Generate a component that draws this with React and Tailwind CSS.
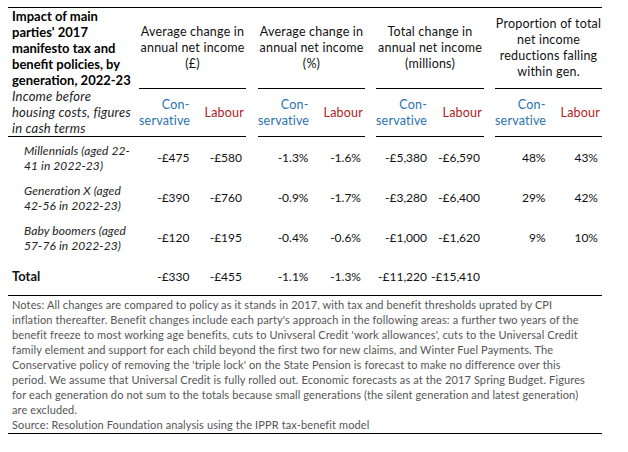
const CON = "text-[#2a72ad]";
const LAB = "text-[#ae1b24]";

const groups = [
  { w: "w-[107px]", title: ["Average change in", "annual net income", "(£)"] },
  { w: "w-[107px]", title: ["Average change in", "annual net income", "(%)"] },
  { w: "w-[108px]", title: ["Total change in", "annual net income", "(millions)"] },
  { w: "w-[107px]", title: ["Proportion of total", "net income", "reductions falling", "within gen."] },
];
const gaps = ["w-[12px]", "w-[11px]", "w-[11px]"];

const rows = [
  { label: ["Millennials (aged 22-", "41 in 2022-23)"], v: ["-£475", "-£580", "-1.3%", "-1.6%", "-£5,380", "-£6,590", "48%", "43%"] },
  { label: ["Generation X (aged", "42-56 in 2022-23)"], v: ["-£390", "-£760", "-0.9%", "-1.7%", "-£3,280", "-£6,400", "29%", "42%"] },
  { label: ["Baby boomers (aged", "57-76 in 2022-23)"], v: ["-£120", "-£195", "-0.4%", "-0.6%", "-£1,000", "-£1,620", "9%", "10%"] },
];
const total = ["-£330", "-£455", "-1.1%", "-1.3%", "-£11,220", "-£15,410", "", ""];

const notes = [
  "Notes: All changes are compared to policy as it stands in 2017, with tax and benefit thresholds uprated by CPI",
  "inflation thereafter. Benefit changes include each party's approach in the following areas: a further two years of the",
  "benefit freeze to most working age benefits, cuts to Univseral Credit 'work allowances', cuts to the Universal Credit",
  "family element and support for each child beyond the first two for new claims, and Winter Fuel Payments. The",
  "Conservative policy of removing the 'triple lock' on the State Pension is forecast to make no difference over this",
  "period. We assume that Universal Credit is fully rolled out. Economic forecasts as at the 2017 Spring Budget. Figures",
  "for each generation do not sum to the totals because small generations (the silent generation and latest generation)",
  "are excluded.",
  "Source: Resolution Foundation analysis using the IPPR tax-benefit model",
];

function ValueCells({ v }) {
  const out = [];
  groups.forEach((g, i) => {
    out.push(
      <div key={"g" + i} className={`${g.w} flex`}>
        <div className="w-1/2 text-right pr-[3px] whitespace-nowrap">{v[i * 2]}</div>
        <div className="w-1/2 text-right pr-[4px] whitespace-nowrap">{v[i * 2 + 1]}</div>
      </div>
    );
    if (i < 3) out.push(<div key={"s" + i} className={gaps[i]} />);
  });
  return out;
}

export default function App() {
  return (
    <div className="w-[628px] h-[452px] bg-white text-black font-['Lato',sans-serif] pl-[8px] pt-[7px]">
      <div className="w-[594px]">
        {/* header */}
        <div className="flex border-t border-black">
          <div className="w-[131px] h-[129px] border-b border-black pl-[4px] text-[13px] leading-[16px]">
            <div className="font-bold whitespace-nowrap">
              Impact of main<br />parties' 2017<br />manifesto tax and<br />benefit policies, by<br />generation, 2022-23
            </div>
            <div className="italic font-normal text-[#222] whitespace-nowrap tracking-[0.2px]">
              Income before<br />housing costs, figures<br />in cash terms
            </div>
          </div>
          {groups.map((g, i) => (
            <div key={i} className="flex">
              <div className={`${g.w} flex flex-col`}>
                <div className="h-[81px] border-b border-black flex flex-col justify-center items-center text-[12.5px] tracking-[0.2px] leading-[16px] text-[#111]">
                  {g.title.map((t, j) => (
                    <div key={j} className="whitespace-nowrap">{t}</div>
                  ))}
                </div>
                <div className="h-[48px] border-b border-black flex items-center text-[12.5px] tracking-[0.2px] leading-[16px]">
                  <div className={`w-1/2 text-right pr-[3px] ${CON}`}>Con-<br />servative</div>
                  <div className={`w-1/2 text-right pr-[2px] ${LAB}`}>Labour</div>
                </div>
              </div>
              {i < 3 && <div className={gaps[i]} />}
            </div>
          ))}
        </div>
        {/* body */}
        <div className="pt-[1px] text-[12px] text-[#111]">
          {rows.map((r, i) => (
            <div key={i} className="flex h-[40px] items-center">
              <div className="w-[131px] pl-[16px] italic leading-[15px] text-[#222] whitespace-nowrap tracking-[0.1px]">
                {r.label[0]}<br />{r.label[1]}
              </div>
              <ValueCells v={r.v} />
            </div>
          ))}
          <div className="flex h-[37px] items-center">
            <div className="w-[131px] pl-[4px] font-bold text-[13px]">Total</div>
            <ValueCells v={total} />
          </div>
        </div>
        {/* notes */}
        <div className="border-t border-b border-black pl-[4px] pt-[1px] pb-[1px] text-[11px] tracking-[0.12px] leading-[15px] text-[#555]">
          {notes.map((n, i) => (
            <div key={i} className="whitespace-nowrap">{n}</div>
          ))}
        </div>
      </div>
    </div>
  );
}
